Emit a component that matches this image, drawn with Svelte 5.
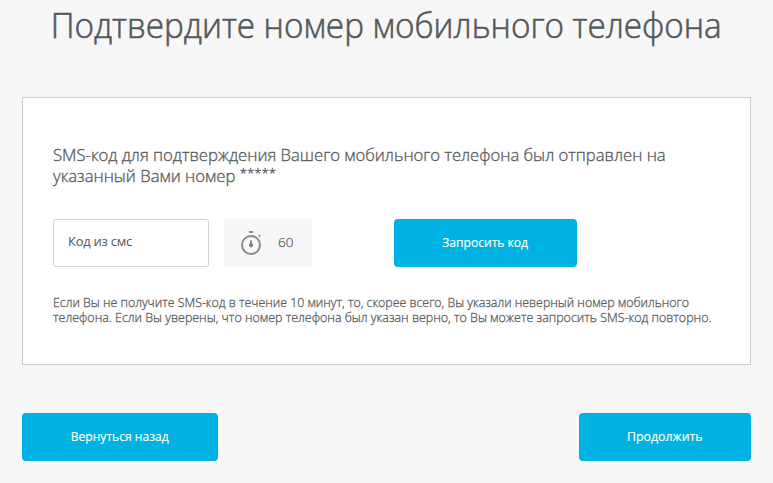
<script>
  let code = $state('');
  let seconds = $state(60);
</script>

<main>
  <h1><span>Подтвердите номер мобильного телефона</span></h1>

  <section class="card">
    <p class="lead">
      <span class="l1">SMS-код для подтверждения Вашего мобильного телефона был отправлен на</span>
      <span class="l2">указанный Вами номер <span class="mask">*****</span></span>
    </p>
    <div class="row">
      <input type="text" placeholder="Код из смс" bind:value={code} />
      <div class="timer">
        <svg width="24" height="28" viewBox="0 0 24 28" fill="none">
          <circle cx="12" cy="16" r="9" stroke="#868b90" stroke-width="2" />
          <path d="M10 3h4" stroke="#868b90" stroke-width="2" />
          <path d="M19.8 6.2l1.5 1.2" stroke="#868b90" stroke-width="2" />
          <path d="M11.4 11h1.2l.3 3.6a1.9 1.9 0 1 1-1.8 0z" fill="#767b80" />
        </svg>
        <span>{seconds}</span>
      </div>
      <button class="request"><span>Запросить код</span></button>
    </div>
    <p class="note">
      <span class="n1">Если Вы не получите SMS-код в течение 10 минут, то, скорее всего, Вы указали неверный номер мобильного</span>
      <span class="n2">телефона. Если Вы уверены, что номер телефона был указан верно, то Вы можете запросить SMS-код повторно.</span>
    </p>
  </section>

  <nav>
    <button class="back"><span>Вернуться назад</span></button>
    <button class="next"><span>Продолжить</span></button>
  </nav>
</main>

<style>
  :global(body) { background: #f7f7f7; }
  main {
    box-sizing: border-box;
    height: 483px;
    padding: 0 22px;
    overflow: hidden;
    background: #f7f7f7;
    color: #5b5e60;
    font-family: 'Open Sans', 'Noto Sans', sans-serif;
  }
  h1 {
    margin: 0;
    height: 97px;
    box-sizing: border-box;
    text-align: center;
    font-size: 35px;
    font-weight: 300;
    line-height: 49px;
    color: #55585a;
    white-space: nowrap;
    -webkit-text-stroke: 0.6px #55585a;
  }
  h1 span { display: inline-block; transform: scaleX(0.95); }
  .card {
    box-sizing: border-box;
    height: 268px;
    padding: 46px 30px 0;
    border: 1px solid #ccc;
    background: #fff;
  }
  p { margin: 0; white-space: nowrap; }
  .lead {
    font-size: 17px;
    font-weight: 300;
    line-height: 21px;
    height: 42px;
    -webkit-text-stroke: 0.35px #5b5e60;
  }
  .l1, .l2, .n1, .n2 { display: block; width: max-content; transform-origin: 0 50%; }
  .l1, .l2 { transform: scaleX(0.98); }
  .l2 { height: 21px; }
  .mask { font-size: 13.5px; line-height: 1; vertical-align: 4px; }
  .row { display: flex; margin-top: 33px; height: 48px; }
  input {
    box-sizing: border-box;
    width: 156px;
    height: 48px;
    padding: 0 14px 4px;
    border: 1px solid #d2d2d6;
    border-radius: 3px;
    background: #fff;
    font: 400 13px 'Open Sans', 'Noto Sans', sans-serif;
    letter-spacing: -0.25px;
    color: #55585a;
    outline: none;
  }
  input::placeholder { color: #55585a; opacity: 1; }
  .timer {
    box-sizing: border-box;
    display: flex;
    align-items: center;
    width: 88px;
    margin-left: 15px;
    padding-left: 15px;
    background: #f7f7f7;
    font-size: 13.5px;
    font-weight: 300;
    -webkit-text-stroke: 0.25px #5b5e60;
  }
  .timer span { margin: 0 0 2px 15px; }
  button {
    height: 48px;
    padding: 0 0 2px;
    border: 0;
    border-radius: 4px;
    background: #00b2e3;
    color: #fff;
    font: 400 13px 'Open Sans', 'Noto Sans', sans-serif;
    -webkit-text-stroke: 0.15px #fff;
  }
  button span { display: inline-block; transform: scaleX(0.93); }
  .request { width: 183px; margin-left: 82px; }
  .note {
    margin-top: 28px;
    font-size: 13px;
    font-weight: 300;
    line-height: 15px;
    -webkit-text-stroke: 0.3px #5b5e60;
  }
  .n1 { transform: scaleX(0.951); }
  .n2 { transform: scaleX(0.957); }
  nav { display: flex; justify-content: space-between; margin-top: 48px; }
  .back { width: 196px; }
  .next { width: 172px; }
  .next span { transform: scaleX(0.95); }
</style>
